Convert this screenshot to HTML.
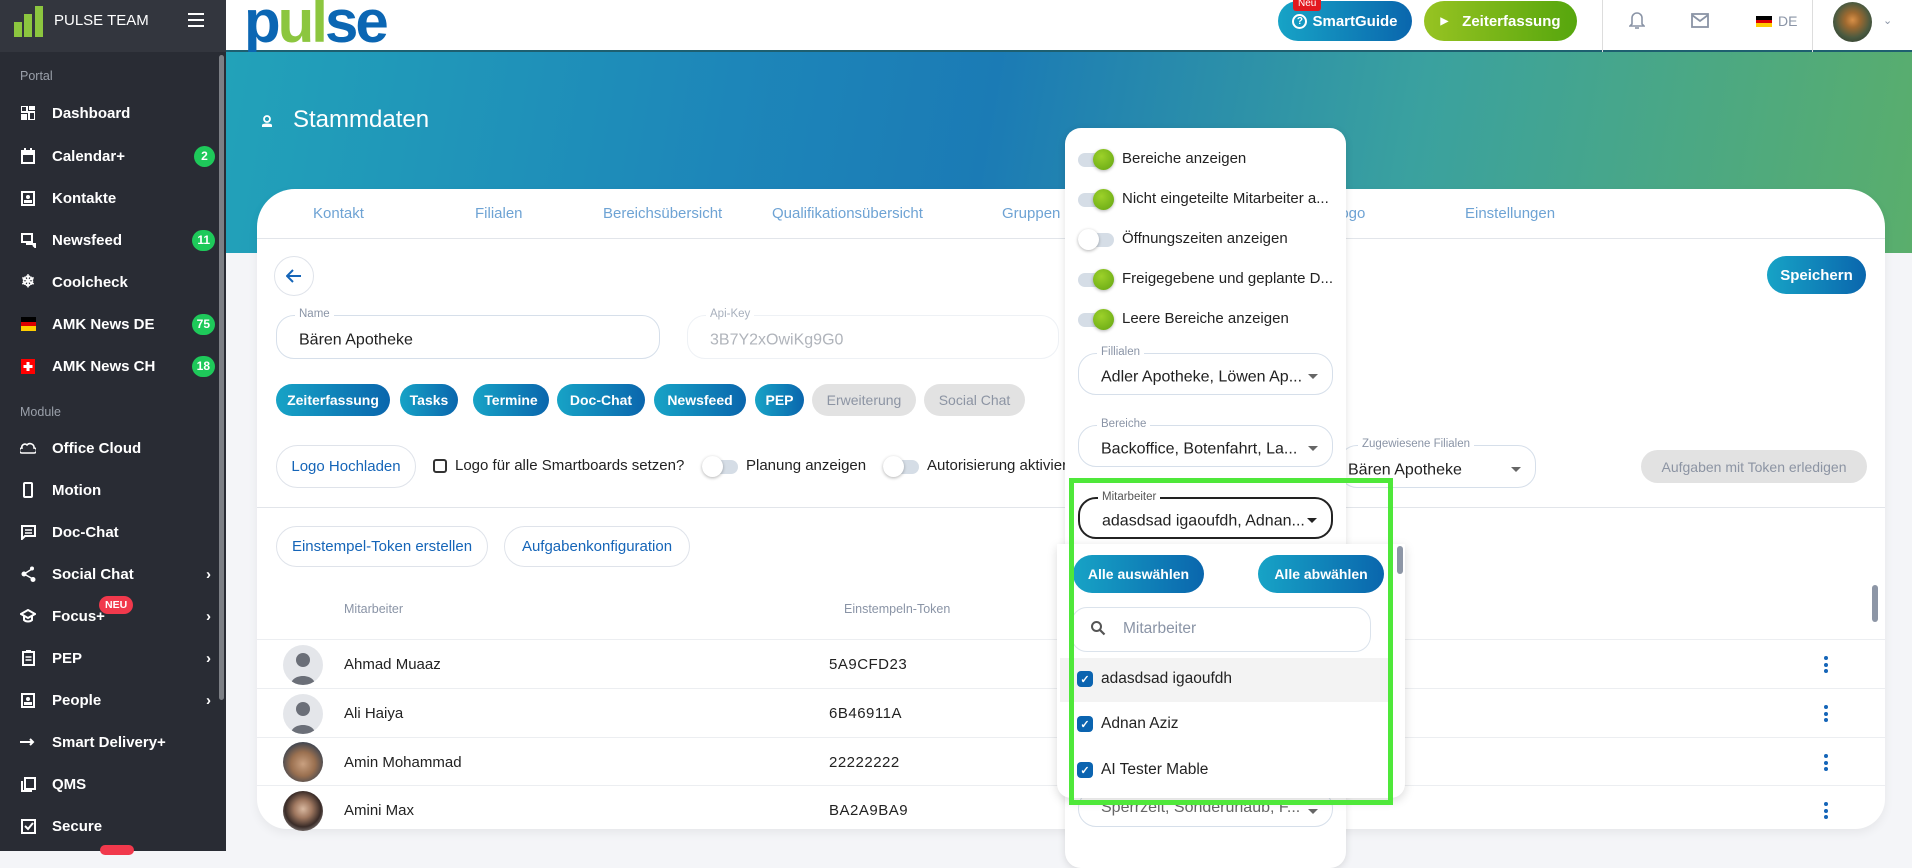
<!DOCTYPE html>
<html><head><meta charset="utf-8">
<style>
*{box-sizing:border-box;margin:0;padding:0}
body{width:1912px;height:851px;overflow:hidden;background:#f4f5f8;font-family:"Liberation Sans",sans-serif;position:relative;color:#222}
.a{position:absolute}
#sb{left:0;top:0;width:226px;height:851px;background:#292c34}
#sbtop{left:0;top:0;width:226px;height:52px;background:#33363e}
.lbl{position:absolute;left:20px;font-size:12.5px;color:#9aa0aa}
.it{position:absolute;left:20px;width:195px;height:30px;display:flex;align-items:center;color:#fff;font-size:15px;font-weight:bold}
.it .ic{width:16px;height:16px;margin-right:16px;display:flex;align-items:center;justify-content:center}
.bdg{position:absolute;right:0;background:#1ec95a;color:#fff;font-size:12px;font-weight:bold;border-radius:11px;height:21px;min-width:21px;padding:0 5px;display:flex;align-items:center;justify-content:center}
.chev{position:absolute;right:4px;color:#fff;font-size:15px}
#hd{left:226px;top:0;width:1686px;height:52px;background:#fff;border-bottom:2px solid #1e5f70}
#hero{left:226px;top:52px;width:1686px;height:201px;background:linear-gradient(100deg,#22a2b9 0%,#1d86b9 30%,#1b7bb5 45%,#3aa19f 70%,#5aae6c 100%)}
#card{left:257px;top:189px;width:1628px;height:640px;background:#fff;border-radius:38px 38px 30px 30px;box-shadow:0 4px 10px rgba(0,0,0,.06)}
.tab{position:absolute;top:205px;font-size:15px;color:#6ea3d4}
.gb{background:linear-gradient(90deg,#17a3c6,#0a66ad);color:#fff;font-weight:bold;border-radius:20px;display:flex;align-items:center;justify-content:center;position:absolute}
.gray{background:#e2e2e2;color:#8c94a3;font-weight:bold;border-radius:20px;display:flex;align-items:center;justify-content:center;position:absolute}
.ob{position:absolute;border:1px solid #dfe3ea;border-radius:22px;color:#1565b8;font-size:15px;display:flex;align-items:center;justify-content:center;background:#fff}
.fld{position:absolute;border:1px solid #d6dfea;border-radius:18px;background:#fff}
.fld .l{position:absolute;top:-8px;left:18px;background:#fff;padding:0 4px;font-size:11.5px;color:#8a94a6}
.fld .v{position:absolute;left:22px;top:50%;transform:translateY(-30%);font-size:16px;color:#222;white-space:nowrap}
.tri{position:absolute;right:14px;top:50%;width:0;height:0;border-left:5px solid transparent;border-right:5px solid transparent;border-top:5px solid #666}
.tg{position:absolute;width:36px;height:14px;border-radius:7px;background:#d5dde6}
.tg i{position:absolute;top:-4px;width:21px;height:21px;border-radius:50%;background:#fff;box-shadow:0 1px 3px rgba(0,0,0,.3)}
.tg.on i{right:0;background:radial-gradient(circle at 40% 35%,#9dd12a,#63a512)}
.tg.off i{left:0}
.row{position:absolute;left:257px;width:1628px;height:1px;background:#eceef1}
.av{position:absolute;left:283px;width:40px;height:40px;border-radius:50%;background:#e4e6ea;overflow:hidden}
.nm{position:absolute;left:344px;font-size:15px;color:#222}
.tk{position:absolute;left:829px;font-size:15px;color:#222;letter-spacing:.5px}
.kb{position:absolute;left:1824px;width:4px}
.kb b{display:block;width:4px;height:4px;border-radius:50%;background:#1565b8;margin-bottom:2.5px}
.pi{position:absolute;left:1078px;display:flex;align-items:center;font-size:15px;color:#222}
.cb{position:absolute;left:1077px;width:16px;height:16px;border-radius:4px;background:#0b64b0;color:#fff;font-size:11px;display:flex;align-items:center;justify-content:center;font-weight:bold}
</style></head><body>

<div id="sb" class="a"></div>
<div id="sbtop" class="a"></div>
<svg class="a" style="left:13px;top:5px" width="32" height="33" viewBox="0 0 32 33"><rect x="1" y="17" width="8" height="15" fill="#8cc63f"/><rect x="11" y="9" width="8" height="23" fill="#8cc63f"/><rect x="22" y="1" width="8" height="31" fill="#8cc63f"/></svg>
<div class="a" style="left:54px;top:12px;color:#fff;font-size:15px">PULSE TEAM</div>
<div class="a" style="left:188px;top:13px;width:16px"><div style="height:2px;background:#fff;margin-bottom:4px"></div><div style="height:2px;background:#fff;margin-bottom:4px"></div><div style="height:2px;background:#fff"></div></div>
<div class="a" style="left:219px;top:55px;width:5px;height:645px;background:#7c7f85;border-radius:3px"></div>

<div class="lbl" style="top:69px">Portal</div>
<div class="it" style="top:98px"><span class="ic"><svg width="14" height="14"><rect x="0" y="0" width="6" height="6" fill="none" stroke="#fff" stroke-width="2"/><rect x="8" y="0" width="6" height="4" fill="#fff"/><rect x="0" y="8" width="6" height="6" fill="#fff"/><rect x="8" y="6" width="6" height="8" fill="none" stroke="#fff" stroke-width="2"/></svg></span>Dashboard</div>
<div class="it" style="top:141px"><span class="ic"><svg width="14" height="16"><rect x="1" y="3" width="12" height="12" fill="none" stroke="#fff" stroke-width="2"/><rect x="1" y="3" width="12" height="4" fill="#fff"/><rect x="3" y="0" width="2" height="4" fill="#fff"/><rect x="9" y="0" width="2" height="4" fill="#fff"/></svg></span>Calendar+<span class="bdg">2</span></div>
<div class="it" style="top:183px"><span class="ic"><svg width="14" height="15"><rect x="1" y="1" width="12" height="13" fill="none" stroke="#fff" stroke-width="2"/><circle cx="7" cy="6" r="2" fill="#fff"/><rect x="3" y="9" width="8" height="3" fill="#fff"/></svg></span>Kontakte</div>
<div class="it" style="top:225px"><span class="ic"><svg width="15" height="15"><rect x="1" y="1" width="10" height="8" fill="none" stroke="#fff" stroke-width="2"/><path d="M5 11h9v3l-2-2" stroke="#fff" stroke-width="2" fill="none"/></svg></span>Newsfeed<span class="bdg">11</span></div>
<div class="it" style="top:267px"><span class="ic" style="font-size:17px">❄</span>Coolcheck</div>
<div class="it" style="top:309px"><span class="ic"><svg width="15" height="14"><rect y="0" width="15" height="5" fill="#000"/><rect y="5" width="15" height="4" fill="#dd0000"/><rect y="9" width="15" height="5" fill="#ffce00"/></svg></span>AMK News DE<span class="bdg">75</span></div>
<div class="it" style="top:351px"><span class="ic"><svg width="14" height="15"><rect width="14" height="15" fill="#ff0000"/><rect x="5.5" y="3" width="3" height="9" fill="#fff"/><rect x="2.5" y="6" width="9" height="3" fill="#fff"/></svg></span>AMK News CH<span class="bdg">18</span></div>
<div class="lbl" style="top:405px">Module</div>
<div class="it" style="top:433px"><span class="ic"><svg width="16" height="12"><path d="M2 11h12a2 2 0 0 0 0-5 4 4 0 0 0-7-3 3 3 0 0 0-5 3 2.5 2.5 0 0 0 0 5z" fill="none" stroke="#fff" stroke-width="1.6"/></svg></span>Office Cloud</div>
<div class="it" style="top:475px"><span class="ic"><svg width="10" height="16"><rect x="1" y="1" width="8" height="14" rx="1" fill="none" stroke="#fff" stroke-width="2"/></svg></span>Motion</div>
<div class="it" style="top:517px"><span class="ic"><svg width="15" height="15"><path d="M1 1h13v10H4l-3 3z" fill="none" stroke="#fff" stroke-width="2"/><path d="M4 5h7M4 8h7" stroke="#fff" stroke-width="1.5"/></svg></span>Doc-Chat</div>
<div class="it" style="top:559px"><span class="ic"><svg width="15" height="16"><circle cx="3" cy="8" r="2.5" fill="#fff"/><circle cx="11" cy="2.5" r="2" fill="#fff"/><circle cx="12" cy="13.5" r="2.5" fill="#fff"/><path d="M3 8L11 3M3 8l9 5" stroke="#fff" stroke-width="1.5"/></svg></span>Social Chat<span class="chev">›</span></div>
<div class="it" style="top:601px"><span class="ic"><svg width="16" height="15"><path d="M8 1L1 5l7 4 7-4zM4 7v4c2 2 6 2 8 0V7" fill="none" stroke="#fff" stroke-width="2"/></svg></span>Focus+<span class="chev">›</span></div>
<div class="a" style="left:99px;top:596px;background:#f1394c;color:#fff;font-size:10.5px;font-weight:bold;border-radius:10px;padding:3px 6px">NEU</div>
<div class="it" style="top:643px"><span class="ic"><svg width="13" height="16"><rect x="1" y="2" width="11" height="13" fill="none" stroke="#fff" stroke-width="2"/><rect x="4" y="0" width="5" height="3" fill="#fff"/><path d="M3.5 7h6M3.5 10h6" stroke="#fff" stroke-width="1.5"/></svg></span>PEP<span class="chev">›</span></div>
<div class="it" style="top:685px"><span class="ic"><svg width="14" height="15"><rect x="1" y="1" width="12" height="13" fill="none" stroke="#fff" stroke-width="2"/><circle cx="7" cy="6" r="2" fill="#fff"/><rect x="3" y="9" width="8" height="3" fill="#fff"/></svg></span>People<span class="chev">›</span></div>
<div class="it" style="top:727px"><span class="ic"><svg width="16" height="8"><path d="M0 4h13M10 1l3 3-3 3" stroke="#fff" stroke-width="2" fill="none"/></svg></span>Smart Delivery+</div>
<div class="it" style="top:769px"><span class="ic"><svg width="15" height="15"><rect x="4" y="1" width="10" height="11" fill="none" stroke="#fff" stroke-width="2"/><path d="M1 4v10h10" stroke="#fff" stroke-width="2" fill="none"/></svg></span>QMS</div>
<div class="it" style="top:811px"><span class="ic"><svg width="15" height="15"><rect x="1" y="1" width="13" height="13" fill="none" stroke="#fff" stroke-width="2"/><path d="M4 7l3 3 5-6" stroke="#fff" stroke-width="2" fill="none"/></svg></span>Secure</div>
<div class="a" style="left:100px;top:845px;width:34px;height:10px;background:#f1394c;border-radius:8px"></div>

<div id="hd" class="a"></div>
<div class="a" style="left:244px;top:-8px;font-size:60px;font-weight:bold;letter-spacing:-3px;line-height:60px"><span style="color:#0b66b3">p</span><span style="color:#8cc63f">ul</span><span style="color:#0b66b3">se</span></div>
<div class="a" style="left:1278px;top:1px;width:134px;height:40px;border-radius:20px;background:linear-gradient(90deg,#17a3c6,#0a66ad);color:#fff;font-weight:bold;font-size:15px;display:flex;align-items:center;justify-content:center"><span style="border:2px solid #fff;border-radius:50%;width:15px;height:15px;font-size:10px;display:inline-flex;align-items:center;justify-content:center;margin-right:5px">?</span>SmartGuide</div>
<div class="a" style="left:1293px;top:-4px;background:#e3181f;color:#fff;font-size:10px;padding:2px 5px;border-radius:3px">Neu</div>
<div class="a" style="left:1424px;top:1px;width:153px;height:40px;border-radius:20px;background:linear-gradient(90deg,#97c322,#56a60d);color:#fff;font-weight:bold;font-size:15px;display:flex;align-items:center;justify-content:center"><span style="font-size:10px;margin-right:14px">▶</span>Zeiterfassung</div>
<div class="a" style="left:1602px;top:0;width:1px;height:52px;background:#ddd"></div>
<div class="a" style="left:1812px;top:0;width:1px;height:52px;background:#ddd"></div>
<svg class="a" style="left:1629px;top:11px" width="16" height="19"><path d="M8 2a5 5 0 0 0-5 5v6l-2 2h14l-2-2V7a5 5 0 0 0-5-5z" fill="none" stroke="#8a94a6" stroke-width="1.6"/><path d="M6 17h4" stroke="#8a94a6" stroke-width="1.6"/></svg>
<svg class="a" style="left:1691px;top:13px" width="18" height="15"><rect x="1" y="1" width="16" height="13" fill="none" stroke="#8a94a6" stroke-width="1.8"/><path d="M1 2l8 6 8-6" fill="none" stroke="#8a94a6" stroke-width="1.8"/></svg>
<svg class="a" style="left:1756px;top:16px" width="16" height="11"><rect width="16" height="4" fill="#000"/><rect y="4" width="16" height="3" fill="#d00"/><rect y="7" width="16" height="4" fill="#fc0"/></svg>
<div class="a" style="left:1778px;top:13px;color:#8a94a6;font-size:14px">DE</div>
<div class="a" style="left:1833px;top:2px;width:39px;height:40px;border-radius:50%;background:radial-gradient(circle at 50% 45%,#d89048 0,#a06a30 25%,#4a5a40 60%,#263026 100%)"></div>
<div class="a" style="left:1883px;top:14px;color:#8a94a6;font-size:11px">⌄</div>

<div id="hero" class="a"></div>
<svg class="a" style="left:261px;top:115px" width="12" height="13"><circle cx="6" cy="4" r="3" fill="none" stroke="#fff" stroke-width="1.8"/><path d="M1 12v-2c0-2 10-2 10 0v2z" fill="#fff"/></svg>
<div class="a" style="left:293px;top:106px;color:#fff;font-size:24px">Stammdaten</div>

<div id="card" class="a"></div>
<div class="tab" style="left:313px">Kontakt</div>
<div class="tab" style="left:475px">Filialen</div>
<div class="tab" style="left:603px">Bereichsübersicht</div>
<div class="tab" style="left:772px">Qualifikationsübersicht</div>
<div class="tab" style="left:1002px">Gruppen</div>
<div class="tab" style="left:1332px">Logo</div>
<div class="tab" style="left:1465px">Einstellungen</div>
<div class="a" style="left:257px;top:238px;width:1628px;height:1px;background:#e2e5ea"></div>

<div class="a" style="left:274px;top:256px;width:40px;height:40px;border-radius:50%;border:1px solid #dfe3ea;background:#fff"></div>
<svg class="a" style="left:286px;top:269px" width="16" height="14"><path d="M15 7H2M7 1L1 7l6 6" fill="none" stroke="#1565b8" stroke-width="2"/></svg>
<div class="gb" style="left:1767px;top:256px;width:99px;height:38px;font-size:15px">Speichern</div>

<div class="fld" style="left:276px;top:315px;width:384px;height:44px"><span class="l">Name</span><span class="v">Bären Apotheke</span></div>
<div class="fld" style="left:687px;top:315px;width:372px;height:44px;border-color:#eef1f5"><span class="l" style="color:#a8b0bd">Api-Key</span><span class="v" style="color:#b0b4bb">3B7Y2xOwiKg9G0</span></div>

<div class="gb" style="left:276px;top:384px;width:114px;height:32px;font-size:14px">Zeiterfassung</div>
<div class="gb" style="left:400px;top:384px;width:58px;height:32px;font-size:14px">Tasks</div>
<div class="gb" style="left:473px;top:384px;width:76px;height:32px;font-size:14px">Termine</div>
<div class="gb" style="left:557px;top:384px;width:88px;height:32px;font-size:14px">Doc-Chat</div>
<div class="gb" style="left:654px;top:384px;width:92px;height:32px;font-size:14px">Newsfeed</div>
<div class="gb" style="left:755px;top:384px;width:49px;height:32px;font-size:14px">PEP</div>
<div class="gray" style="left:812px;top:384px;width:104px;height:32px;font-size:14px;font-weight:normal">Erweiterung</div>
<div class="gray" style="left:924px;top:384px;width:101px;height:32px;font-size:14px;font-weight:normal">Social Chat</div>

<div class="ob" style="left:276px;top:445px;width:140px;height:43px">Logo Hochladen</div>
<div class="a" style="left:433px;top:459px;width:14px;height:14px;border:2px solid #333;border-radius:3px"></div>
<div class="a" style="left:455px;top:457px;font-size:15px">Logo für alle Smartboards setzen?</div>
<div class="tg off" style="left:702px;top:460px"><i></i></div>
<div class="a" style="left:746px;top:457px;font-size:15px">Planung anzeigen</div>
<div class="tg off" style="left:883px;top:460px"><i></i></div>
<div class="a" style="left:927px;top:457px;font-size:15px">Autorisierung aktivieren</div>

<div class="fld" style="left:1339px;top:445px;width:197px;height:43px"><span class="l">Zugewiesene Filialen</span><span class="v" style="left:8px">Bären Apotheke</span><span class="tri"></span></div>
<div class="gray" style="left:1641px;top:450px;width:226px;height:33px;font-size:14px;font-weight:normal">Aufgaben mit Token erledigen</div>

<div class="a" style="left:257px;top:507px;width:1628px;height:1px;background:#e2e5ea"></div>
<div class="ob" style="left:276px;top:526px;width:212px;height:41px">Einstempel-Token erstellen</div>
<div class="ob" style="left:504px;top:526px;width:186px;height:41px">Aufgabenkonfiguration</div>

<div class="a" style="left:344px;top:602px;font-size:12.5px;color:#8a94a6">Mitarbeiter</div>
<div class="a" style="left:844px;top:602px;font-size:12.5px;color:#8a94a6">Einstempeln-Token</div>
<div class="row" style="top:639px"></div><div class="row" style="top:688px"></div><div class="row" style="top:737px"></div><div class="row" style="top:785px"></div>

<div class="av" style="top:645px"><svg width="40" height="40"><circle cx="20" cy="15" r="7" fill="#6b6f78"/><path d="M8 40c0-12 24-12 24 0z" fill="#6b6f78"/></svg></div>
<div class="av" style="top:694px"><svg width="40" height="40"><circle cx="20" cy="15" r="7" fill="#6b6f78"/><path d="M8 40c0-12 24-12 24 0z" fill="#6b6f78"/></svg></div>
<div class="av" style="top:742px;background:radial-gradient(circle at 50% 55%,#c9a080 0,#9a7050 40%,#3d4450 75%)"></div>
<div class="av" style="top:791px;background:radial-gradient(circle at 50% 45%,#d8b8a0 0,#a07860 30%,#3a2c28 60%,#ccc 100%)"></div>
<div class="nm" style="top:656px">Ahmad Muaaz</div><div class="tk" style="top:656px">5A9CFD23</div>
<div class="nm" style="top:705px">Ali Haiya</div><div class="tk" style="top:705px">6B46911A</div>
<div class="nm" style="top:754px">Amin Mohammad</div><div class="tk" style="top:754px">22222222</div>
<div class="nm" style="top:802px">Amini Max</div><div class="tk" style="top:802px">BA2A9BA9</div>
<div class="kb" style="top:656px"><b></b><b></b><b></b></div>
<div class="kb" style="top:705px"><b></b><b></b><b></b></div>
<div class="kb" style="top:754px"><b></b><b></b><b></b></div>
<div class="kb" style="top:802px"><b></b><b></b><b></b></div>
<div class="a" style="left:1872px;top:585px;width:6px;height:37px;border-radius:3px;background:#8d96a6"></div>

<div class="a" style="left:1065px;top:128px;width:281px;height:740px;background:#fff;border-radius:16px;box-shadow:0 2px 8px rgba(0,0,0,.12)"></div>
<div class="tg on" style="left:1078px;top:153px"><i></i></div><div class="pi" style="left:1122px;top:150px">Bereiche anzeigen</div>
<div class="tg on" style="left:1078px;top:193px"><i></i></div><div class="pi" style="left:1122px;top:190px">Nicht eingeteilte Mitarbeiter a...</div>
<div class="tg off" style="left:1078px;top:233px"><i></i></div><div class="pi" style="left:1122px;top:230px">Öffnungszeiten anzeigen</div>
<div class="tg on" style="left:1078px;top:273px"><i></i></div><div class="pi" style="left:1122px;top:270px">Freigegebene und geplante D...</div>
<div class="tg on" style="left:1078px;top:313px"><i></i></div><div class="pi" style="left:1122px;top:310px">Leere Bereiche anzeigen</div>
<div class="fld" style="left:1078px;top:353px;width:255px;height:42px"><span class="l">Fillialen</span><span class="v" style="left:22px">Adler Apotheke, Löwen Ap...</span><span class="tri"></span></div>
<div class="fld" style="left:1078px;top:425px;width:255px;height:42px"><span class="l">Bereiche</span><span class="v">Backoffice, Botenfahrt, La...</span><span class="tri"></span></div>
<div class="fld" style="left:1078px;top:497px;width:255px;height:42px;border:2px solid #222"><span class="l" style="color:#555">Mitarbeiter</span><span class="v">adasdsad igaoufdh, Adnan...</span><span class="tri" style="border-top-color:#222"></span></div>
<div class="fld" style="left:1078px;top:790px;width:255px;height:37px"><span class="v" style="color:#666;transform:none;top:8px">Sperrzeit, Sonderurlaub, F...</span><span class="tri"></span></div>

<div class="a" style="left:1057px;top:544px;width:348px;height:254px;background:#fff;border-radius:0 0 14px 14px;box-shadow:0 3px 10px rgba(0,0,0,.15)"></div>
<div class="a" style="left:1397px;top:546px;width:6px;height:28px;background:#8d96a6;border-radius:3px"></div>
<div class="gb" style="left:1073px;top:555px;width:131px;height:38px;font-size:14px">Alle auswählen</div>
<div class="gb" style="left:1258px;top:555px;width:126px;height:38px;font-size:14px">Alle abwählen</div>
<div class="a" style="left:1071px;top:607px;width:300px;height:45px;border:1px solid #dbe3ec;border-radius:16px"></div>
<svg class="a" style="left:1090px;top:620px" width="16" height="16"><circle cx="6.5" cy="6.5" r="4.5" fill="none" stroke="#555" stroke-width="2"/><path d="M10 10l4.5 4.5" stroke="#555" stroke-width="2.2"/></svg>
<div class="a" style="left:1123px;top:620px;font-size:15.5px;color:#8a94a6">Mitarbeiter</div>
<div class="a" style="left:1060px;top:658px;width:330px;height:44px;background:#f3f3f3"></div>
<div class="cb" style="top:671px">✓</div><div class="a" style="left:1101px;top:670px;font-size:15.5px">adasdsad igaoufdh</div>
<div class="cb" style="top:716px">✓</div><div class="a" style="left:1101px;top:715px;font-size:15.5px">Adnan Aziz</div>
<div class="cb" style="top:762px">✓</div><div class="a" style="left:1101px;top:761px;font-size:15.5px">AI Tester Mable</div>

<div class="a" style="left:1069px;top:478px;width:324px;height:327px;border:5px solid #4fe83a"></div>
</body></html>
